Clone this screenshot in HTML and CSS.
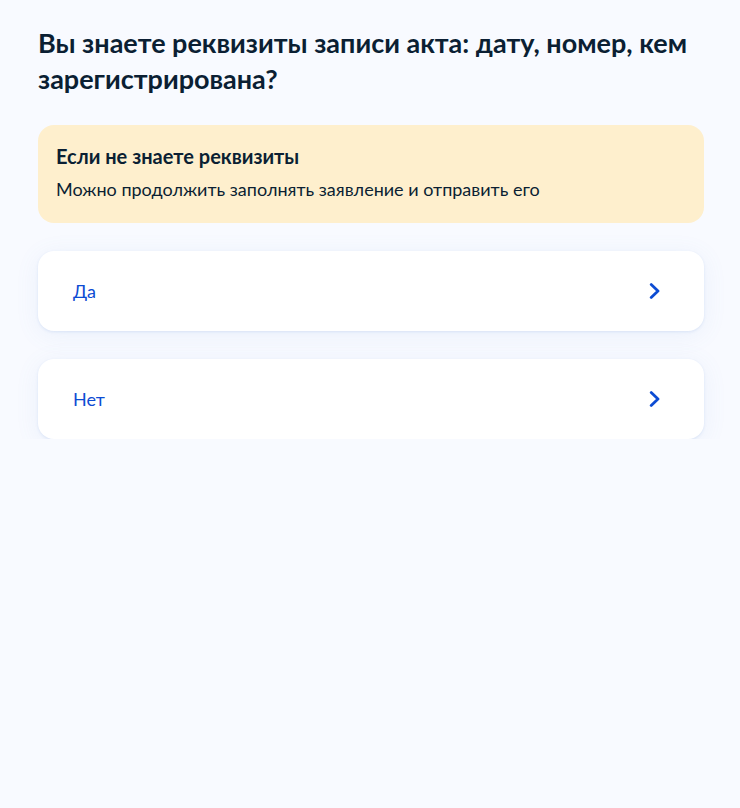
FILE: index.html
```html
<!DOCTYPE html>
<html lang="ru">
<head>
<meta charset="utf-8">
<link rel="stylesheet" href="styles.css">
</head>
<body>
<main class="page">
  <h1 class="title">Вы знаете реквизиты записи акта: дату, номер, кем зарегистрирована?</h1>
  <div class="notice">
    <div class="notice-title">Если не знаете реквизиты</div>
    <div class="notice-text">Можно продолжить заполнять заявление и отправить его</div>
  </div>
  <div class="options">
    <a class="option" href="#">
      <span class="option-label">Да</span>
      <svg class="chevron" width="12" height="16" viewBox="0 0 12 16"><path d="M2.2 1.6 L9 8 L2.2 14.4" fill="none" stroke="#0d4cd3" stroke-width="2.8" stroke-linecap="round" stroke-linejoin="round"/></svg>
    </a>
    <a class="option" href="#">
      <span class="option-label">Нет</span>
      <svg class="chevron" width="12" height="16" viewBox="0 0 12 16"><path d="M2.2 1.6 L9 8 L2.2 14.4" fill="none" stroke="#0d4cd3" stroke-width="2.8" stroke-linecap="round" stroke-linejoin="round"/></svg>
    </a>
  </div>
</main>
</body>
</html>
```
FILE: styles.css
```css
html, body {
  margin: 0;
  padding: 0;
  background: #f8faff;
}
body {
  font-family: Lato, "Noto Sans", sans-serif;
  color: #0b1f33;
}
.page {
  padding: 25px 36px 0 38px;
}
.title {
  margin: 0;
  font-size: 27px;
  line-height: 36px;
  font-weight: 700;
  color: #0b1f33;
}
.notice {
  margin-top: 28px;
  background: #feefcd;
  border-radius: 16px;
  padding: 17px 18px 21px;
}
.notice-title {
  font-size: 20px;
  line-height: 28px;
  font-weight: 700;
}
.notice-text {
  margin-top: 6px;
  font-size: 18px;
  line-height: 26px;
}
.options {
  margin-top: 28px;
  display: flex;
  flex-direction: column;
  gap: 28px;
}
.option {
  display: flex;
  align-items: center;
  justify-content: space-between;
  height: 80px;
  padding: 0 43px 0 35px;
  background: #fff;
  border-radius: 16px;
  text-decoration: none;
  box-shadow: 0 1px 3px rgba(102, 140, 210, 0.16), 0 4px 24px rgba(102, 140, 210, 0.09);
}
.option-label {
  font-size: 18px;
  line-height: 24px;
  color: #0d4cd3;
}
.chevron {
  display: block;
}
```
